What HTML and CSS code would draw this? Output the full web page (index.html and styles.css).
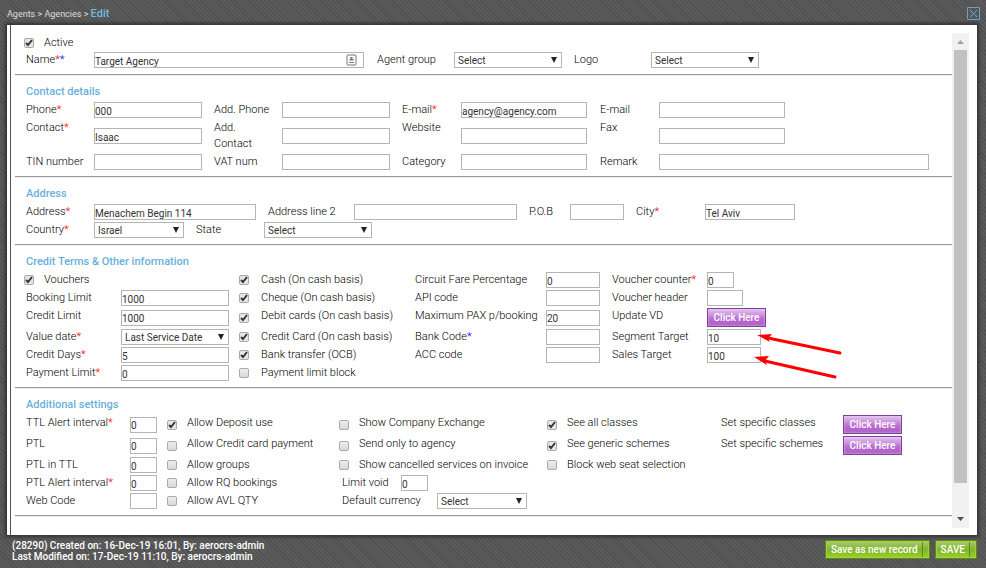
FILE: index.html
```
<!DOCTYPE html>
<html lang="en">
<head>
<meta charset="utf-8">
<title>Agents - Agencies - Edit</title>
<link rel="stylesheet" href="styles.css">
</head>
<body>
<header class="topbar">
  <nav class="crumbs"><a href="#">Agents</a> &gt; <a href="#">Agencies</a> &gt; <b>Edit</b></nav>
  <button class="close" type="button" aria-label="Close"><svg viewBox="0 0 13 13"><path d="M.5.5h12v12H.5z M3 3l7 7 M10 3l-7 7"/></svg></button>
</header>

<main class="panel">
  <form class="content" id="agency">
    <section class="sec first">
      <label class="check"><input type="checkbox" checked><span>Active</span></label>
      <div class="row general">
        <label for="name">Name<i class="req">*</i><i class="uni">*</i></label>
        <div class="withicon"><input id="name" type="text" value="Target Agency"><svg viewBox="0 0 12 12"><rect x="1" y="1" width="9" height="10" rx="1"/><path class="fill" d="M4.500 3h2v2h1v1.500h-4V5h1z M3 8h5v1H3z"/></svg></div>
        <label for="group">Agent group</label>
        <div class="sel m"><select id="group"><option>Select</option></select></div>
        <label for="logo">Logo</label>
        <div class="sel m"><select id="logo"><option>Select</option></select></div>
      </div>
    </section>

    <section class="sec">
      <h2>Contact details</h2>
      <div class="row contact">
        <label for="phone">Phone<i class="req">*</i></label><input id="phone" type="text" value="000">
        <label for="aphone">Add. Phone</label><input id="aphone" type="text">
        <label for="email">E-mail<i class="req">*</i></label><input id="email" type="text" value="agency@agency.com">
        <label for="email2">E-mail</label><input id="email2" class="l" type="text">
        <label for="contact">Contact<i class="req">*</i></label><input id="contact" type="text" value="Isaac">
        <label for="acontact">Add. Contact</label><input id="acontact" type="text">
        <label for="web">Website</label><input id="web" type="text">
        <label for="fax">Fax</label><input id="fax" class="l" type="text">
        <label for="tin">TIN number</label><input id="tin" type="text">
        <label for="vat">VAT num</label><input id="vat" type="text">
        <label for="cat">Category</label><input id="cat" type="text">
        <label for="remark">Remark</label><input id="remark" type="text">
      </div>
    </section>

    <section class="sec">
      <h2>Address</h2>
      <div class="row addr">
        <label for="addr">Address<i class="req">*</i></label><input id="addr" type="text" value="Menachem Begin 114">
        <label for="addr2">Address line 2</label><input id="addr2" type="text">
        <label for="pob">P.O.B</label><input id="pob" type="text">
        <label for="city">City<i class="req">*</i></label><input id="city" type="text" value="Tel Aviv">
      </div>
      <div class="row country">
        <label for="country">Country<i class="req">*</i></label>
        <div class="sel s"><select id="country"><option>Israel</option></select></div>
        <label for="state">State</label>
        <div class="sel m"><select id="state"><option>Select</option></select></div>
      </div>
    </section>

    <section class="sec">
      <h2>Credit Terms &amp; Other information</h2>
      <div class="row credit">
        <label class="check lead"><input type="checkbox" checked><span>Vouchers</span></label>
        <label class="check"><input type="checkbox" checked><span>Cash (On cash basis)</span></label>
        <label for="cfp">Circuit Fare Percentage</label><input id="cfp" type="text" value="0">
        <label for="vc">Voucher counter<i class="req">*</i></label><input id="vc" class="xs" type="text" value="0">

        <label for="bl">Booking Limit</label><input id="bl" type="text" value="1000">
        <label class="check"><input type="checkbox" checked><span>Cheque (On cash basis)</span></label>
        <label for="api">API code</label><input id="api" type="text">
        <label for="vh">Voucher header</label><input id="vh" class="sm" type="text">

        <label for="cl">Credit Limit</label><input id="cl" type="text" value="1000">
        <label class="check"><input type="checkbox" checked><span>Debit cards (On cash basis)</span></label>
        <label for="pax">Maximum PAX p/booking</label><input id="pax" type="text" value="20">
        <label for="vd">Update VD</label><button id="vd" class="click" type="button">Click Here</button>

        <label for="vdate">Value date<i class="req">*</i></label>
        <div class="sel"><select id="vdate"><option>Last Service Date</option></select></div>
        <label class="check"><input type="checkbox" checked><span>Credit Card (On cash basis)</span></label>
        <label for="bank">Bank Code<i class="uni">*</i></label><input id="bank" type="text">
        <label for="seg">Segment Target</label><input id="seg" class="md" type="text" value="10">

        <label for="cd">Credit Days<i class="req">*</i></label><input id="cd" type="text" value="5">
        <label class="check"><input type="checkbox" checked><span>Bank transfer (OCB)</span></label>
        <label for="acc">ACC code</label><input id="acc" type="text">
        <label for="sales">Sales Target</label><input id="sales" class="md" type="text" value="100">

        <label for="pl">Payment Limit<i class="req">*</i></label><input id="pl" type="text" value="0">
        <label class="check"><input type="checkbox"><span>Payment limit block</span></label>
      </div>
      <svg class="arrows" viewBox="0 0 90 50"><path class="line" d="M14 5L86 20 M11 28L81 44"/><path class="tip" d="M3 2L18 1L14 5.500L16 9z M0 24L15 23L11 27.500L13 32z"/></svg>
    </section>

    <section class="sec">
      <h2>Additional settings</h2>
      <div class="row extra">
        <label for="ttl">TTL Alert interval<i class="req">*</i></label><input id="ttl" type="text" value="0">
        <label class="check"><input type="checkbox" checked><span>Allow Deposit use</span></label>
        <label class="check"><input type="checkbox"><span>Show Company Exchange</span></label>
        <label class="check"><input type="checkbox" checked><span>See all classes</span></label>
        <label for="ssc">Set specific classes</label><button id="ssc" class="click" type="button">Click Here</button>

        <label for="ptl">PTL</label><input id="ptl" type="text" value="0">
        <label class="check"><input type="checkbox"><span>Allow Credit card payment</span></label>
        <label class="check"><input type="checkbox"><span>Send only to agency</span></label>
        <label class="check"><input type="checkbox" checked><span>See generic schemes</span></label>
        <label for="sss">Set specific schemes</label><button id="sss" class="click" type="button">Click Here</button>

        <label class="start" for="pit">PTL in TTL</label><input id="pit" type="text" value="0">
        <label class="check"><input type="checkbox"><span>Allow groups</span></label>
        <label class="check"><input type="checkbox"><span>Show cancelled services on invoice</span></label>
        <label class="check"><input type="checkbox"><span>Block web seat selection</span></label>

        <label class="start" for="pai">PTL Alert interval<i class="req">*</i></label><input id="pai" type="text" value="0">
        <label class="check"><input type="checkbox"><span>Allow RQ bookings</span></label>
        <div class="pair void"><label for="lv">Limit void</label><input id="lv" type="text" value="0"></div>

        <label class="start" for="wc">Web Code</label><input id="wc" type="text">
        <label class="check"><input type="checkbox"><span>Allow AVL QTY</span></label>
        <div class="pair currency"><label for="cur">Default currency</label><div class="sel s"><select id="cur"><option>Select</option></select></div></div>
      </div>
    </section>

    <section class="sec">
      <h2>Office number</h2>
    </section>
  </form>
  <div class="scroll" aria-hidden="true">
    <svg viewBox="0 0 17 17"><path fill="#a0a0a0" d="M5 11h7L8.500 7z"/></svg>
    <div class="track"><div class="thumb"></div></div>
    <svg viewBox="0 0 17 17"><path fill="#505050" d="M5 6h7L8.500 10z"/></svg>
  </div>
</main>

<footer class="bottom">
  <p>(28290) Created on: 16-Dec-19 16:01, By: aerocrs-admin<br>Last Modified on: 17-Dec-19 11:10, By: aerocrs-admin</p>
  <div class="actions"><button type="submit" form="agency">Save as new record</button><button type="submit" form="agency">SAVE</button></div>
</footer>
</body>
</html>
```
FILE: styles.css
```
* { box-sizing: border-box; }
body {
  margin: 0;
  height: 100vh;
  display: flex;
  flex-direction: column;
  overflow: hidden;
  font: 11px/16px Roboto, "Liberation Sans", sans-serif;
  color: #333;
  background: repeating-linear-gradient(45deg, #4f4f4f 0 1px, #5b5b5b 1px 3px);
}
.topbar {
  height: 25px;
  flex: none;
  display: flex;
  justify-content: space-between;
  align-items: center;
  padding: 2px 6px 0 7px;
}
.crumbs { font-size: 9px; color: #ddd; }
.crumbs a { color: inherit; text-decoration: none; }
.crumbs b { font-size: 11px; font-weight: 500; color: #70b8e0; }
.close { width: 13px; height: 13px; padding: 0; border: 0; background: none; }
.close svg { display: block; fill: none; stroke: #62a5c8; }

.panel {
  flex: 1;
  min-height: 0;
  display: flex;
  margin: 0 9px 0 7px;
  padding: 8px 8px 7px 4px;
  background: linear-gradient(#555, #555) 3px 0 / 1px 100% no-repeat #fff;
  box-shadow: 0 0 3px 2px #333;
}
.content { flex: 1; min-width: 0; overflow: hidden; padding-left: 4px; }
.sec {
  position: relative;
  padding: 9px 0 6px 11px;
  border-top: 1px solid #9a9a9a;
  box-shadow: inset 0 1px #eee;
}
.sec.first { border: 0; box-shadow: none; padding-top: 2px; }
h2 { margin: 0 0 2px; font-size: 11px; line-height: 16px; font-weight: 500; color: #6aafda; }

.row { display: grid; gap: 2px 0; align-items: center; justify-content: start; }
.row label, .pair label { align-self: start; height: 16px; font-weight: 300; color: #000; }
i { font-style: normal; }
.req { color: #f00; }
.uni { color: #00f; }

.general { grid-template-columns: 68px 283px 77px 120px 77px 108px; }
.contact { grid-template-columns: 68px 120px 68px 120px 59px 139px 59px 270px; }
.row.contact label { height: auto; padding-right: 8px; }
.addr { grid-template-columns: 68px 174px 86px 175px 41px 66px 69px 90px; margin-bottom: 2px; }
.country { grid-template-columns: 68px 102px 68px 108px; }
.credit { grid-template-columns: 95px 118px 176px 131px 66px 95px 60px; }
.extra { grid-template-columns: 104px 37px 172px 208px 174px 122px 60px; }

input[type="text"], select {
  display: block;
  width: 100%;
  height: 16px;
  margin: 0;
  border: 1px solid #b5b5b5;
  border-radius: 0;
  background: #fff;
  font: 10px/12px Roboto, "Liberation Sans", sans-serif;
  color: #333;
}
input[type="text"] { padding: 2px 0 0; }
select { appearance: none; padding: 1px 3px 0; }
.row > input[type="text"] { width: calc(100% - 12px); }
.row > input.l { width: 126px; }
.contact > #remark, .addr > #city { width: 100%; }
.contact > #email, .contact > #web, .contact > #cat { width: 126px; }
.credit > #bl, .credit > #cl, .credit > #cd, .credit > #pl, .credit > .sel { width: 108px; }
.credit > #cfp, .credit > #api, .credit > #pax, .credit > #bank, .credit > #acc { width: 54px; }
.row > input.xs { width: 27px; }
.row > input.sm { width: 36px; }
.row > input.md { width: 54px; }
.extra > input[type="text"], .pair > input[type="text"] { width: 27px; }
.withicon { position: relative; width: 270px; }
.withicon svg { position: absolute; right: 6px; top: 2px; width: 12px; height: 12px; fill: none; stroke: #777; }
.withicon .fill { fill: #777; stroke: none; }

.sel { position: relative; }
.sel::after {
  content: "";
  position: absolute;
  right: 5px;
  top: 5px;
  border: solid transparent;
  border-width: 6px 3px 0;
  border-top-color: #222;
}
.m { width: 108px; }
.s { width: 90px; }

.check { display: flex; align-items: center; gap: 10px; font-weight: 300; color: #000; }
.row .check { align-self: stretch; height: auto; }
.check span { align-self: start; height: 16px; }
.row .check span { margin-bottom: -2px; }
.credit .check:not(.lead) { gap: 12px; }
.check input {
  appearance: none;
  flex: none;
  width: 10px;
  height: 10px;
  margin: 0;
  border: 1px solid #aaa;
  border-radius: 2px;
  background: linear-gradient(#eee, #d8d8d8);
}
.check input:checked {
  background: url("data:image/svg+xml,%3Csvg xmlns='http://www.w3.org/2000/svg' viewBox='0 0 8 8'%3E%3Cpath d='M1 4l2 2 4-5' fill='none' stroke='%23333' stroke-width='1.9'/%3E%3C/svg%3E") center / 8px 8px no-repeat #e6e6e6;
}
.first > .check, .row .lead { margin-left: -2px; }
.first > .check { margin-bottom: 1px; }
.row .lead { grid-column: span 2; }

.click {
  width: 59px;
  height: 19px;
  padding: 0;
  border: 1px solid #80409a;
  background: linear-gradient(#e2c6ee, #b96bd0 60%, #b060c8);
  box-shadow: inset 0 0 2px #e8d0f0;
  color: #fff;
  font: 500 10px/15px Roboto, sans-serif;
}
.extra .start { grid-column: 1; }
.pair { display: grid; align-items: center; grid-column: span 2; padding-left: 3px; }
.void { grid-template-columns: 59px auto; }
.currency { grid-template-columns: 95px auto; }

.arrows { position: absolute; left: 739px; top: 88px; width: 90px; height: 50px; pointer-events: none; }
.line { stroke: #f00; stroke-width: 3; stroke-linecap: round; fill: none; }
.tip { fill: #f00; }

.scroll { flex: none; width: 17px; display: flex; flex-direction: column; background: #f1f1f1; }
.scroll svg { display: block; height: 17px; }
.track { flex: 1; padding: 0 2px; }
.thumb { height: 94%; background: #c1c1c1; }

.bottom {
  flex: none;
  height: 33px;
  display: flex;
  justify-content: space-between;
  align-items: flex-start;
  padding: 5px 9px 0 12px;
}
.bottom p { margin: 0; font-size: 10px; line-height: 11px; font-weight: 500; color: #fff; }
.actions { display: flex; gap: 5px; }
.actions button {
  height: 19px;
  padding: 0 11px 0 5px;
  border: 1px solid #5c8a12;
  background: linear-gradient(#5c8a12, #5c8a12) right 6px top / 1px 100% no-repeat, linear-gradient(#a9cc78, #7fb52a 50%, #9ad028);
  box-shadow: inset 0 0 1px 1px #a5d045;
  color: #fff;
  font: 500 10px/17px Roboto, sans-serif;
}
```
